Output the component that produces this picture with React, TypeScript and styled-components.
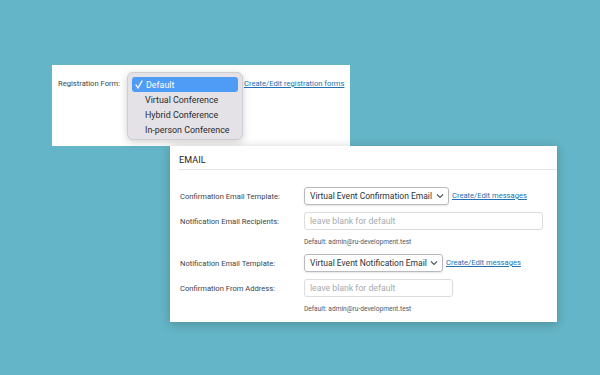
import styled, { createGlobalStyle } from "styled-components";

const GlobalStyle = createGlobalStyle`
    html, body {
        margin: 0;
        padding: 0;
        background: #64b5c7;
        font-family: "Roboto", "Liberation Sans", sans-serif;
    }
`;

const Page = styled.div`
    width: 600px;
    height: 375px;
    overflow: hidden;
    display: flex;
    flex-direction: column;
    background: #64b5c7;
`;

const TopPanel = styled.div`
    position: relative;
    flex-shrink: 0;
    margin: 65px 0 0 52px;
    width: 298px;
    height: 81px;
    background: #fff;
    box-sizing: border-box;
    padding: 14px 0 0 6px;
    display: flex;
    align-items: flex-start;
`;

const RegLabel = styled.span`
    font-size: 7.6px;
    color: #3c434a;
    width: 186px;
    line-height: 10px;
`;

const Link = styled.a`
    font-size: 7.6px;
    color: #2271b1;
    text-decoration: underline;
    line-height: 10px;
    white-space: nowrap;
`;

const Menu = styled.div`
    position: absolute;
    left: 75px;
    top: 7px;
    width: 116px;
    height: 68px;
    box-sizing: border-box;
    padding: 4px;
    border-radius: 6px;
    background: #e4e2e7;
    border: 1px solid #cfcdd2;
    box-shadow: 0 2px 8px rgba(0, 0, 0, 0.18);
    display: flex;
    flex-direction: column;
`;

const MenuItem = styled.div<{ active?: boolean }>`
    height: 15px;
    flex-shrink: 0;
    display: flex;
    align-items: center;
    padding-left: ${(p) => (p.active ? 3 : 13)}px;
    gap: 3px;
    border-radius: 3px;
    font-size: 8.9px;
    white-space: nowrap;
    color: ${(p) => (p.active ? "#fff" : "#2a2a2c")};
    background: ${(p) => (p.active ? "#4f9cf6" : "transparent")};
`;

const EmailPanel = styled.div`
    flex-shrink: 0;
    margin-left: 170px;
    width: 387px;
    height: 176px;
    background: #fff;
    box-shadow: 0 2px 10px rgba(0, 0, 0, 0.22);
    display: flex;
    flex-direction: column;
    position: relative;
`;

const Header = styled.div`
    flex-shrink: 0;
    margin-left: 9px;
    height: 24px;
    box-sizing: border-box;
    padding-top: 9px;
    border-bottom: 1px solid #e5e7e9;
    font-size: 9px;
    color: #1d2327;
    letter-spacing: 0.1px;
`;

const Form = styled.div`
    display: grid;
    grid-template-columns: 124px 1fr;
    padding: 17px 0 0 10px;
`;

const Label = styled.div`
    font-size: 7.6px;
    color: #3c434a;
    display: flex;
    align-items: center;
    height: 18px;
    padding-top: 1px;
    box-sizing: border-box;
`;

const Field = styled.div`
    display: flex;
    align-items: center;
    gap: 3px;
    height: 18px;
`;

const Select = styled.div<{ w: number }>`
    width: ${(p) => p.w}px;
    height: 18px;
    box-sizing: border-box;
    border: 1px solid #b8babd;
    border-radius: 3px;
    box-shadow: 0 1px 2px rgba(0, 0, 0, 0.1);
    display: flex;
    align-items: center;
    justify-content: space-between;
    padding: 0 4px 0 5px;
    font-size: 8.5px;
    color: #2c3338;
    white-space: nowrap;
`;

const Input = styled.div<{ w: number }>`
    width: ${(p) => p.w}px;
    height: 18px;
    box-sizing: border-box;
    border: 1px solid #dcdcde;
    border-radius: 3px;
    display: flex;
    align-items: center;
    padding-left: 5px;
    font-size: 8.7px;
    color: #a7aaad;
`;

const Help = styled.div`
    grid-column: 2;
    font-size: 6.6px;
    color: #50575e;
    height: 12px;
    margin: 6px 0;
    display: flex;
    align-items: center;
`;

const Spacer = styled.div`
    height: 7px;
    grid-column: 1 / 3;
`;

const Chevron = () => (
    <svg width="8" height="6" viewBox="0 0 8 6">
        <path d="M1 1.5 L4 4.5 L7 1.5" fill="none" stroke="#50575e" strokeWidth="1.1" />
    </svg>
);

const Check = () => (
    <svg width="8" height="9" viewBox="0 0 8 9">
        <path d="M1 5 L3 8 L7 1" fill="none" stroke="#fff" strokeWidth="1.3" strokeLinecap="round" />
    </svg>
);

export default function App() {
    return (
        <Page>
            <GlobalStyle />
            <TopPanel>
                <RegLabel>Registration Form:</RegLabel>
                <Link>Create/Edit registration forms</Link>
                <Menu>
                    <MenuItem active>
                        <Check />
                        Default
                    </MenuItem>
                    <MenuItem>Virtual Conference</MenuItem>
                    <MenuItem>Hybrid Conference</MenuItem>
                    <MenuItem>In-person Conference</MenuItem>
                </Menu>
            </TopPanel>
            <EmailPanel>
                <Header>EMAIL</Header>
                <Form>
                    <Label>Confirmation Email Template:</Label>
                    <Field>
                        <Select w={145}>
                            Virtual Event Confirmation Email <Chevron />
                        </Select>
                        <Link>Create/Edit messages</Link>
                    </Field>
                    <Spacer />
                    <Label>Notification Email Recipients:</Label>
                    <Field>
                        <Input w={239}>leave blank for default</Input>
                    </Field>
                    <Help>Default: admin@ru-development.test</Help>
                    <Label>Notification Email Template:</Label>
                    <Field>
                        <Select w={139}>
                            Virtual Event Notification Email <Chevron />
                        </Select>
                        <Link>Create/Edit messages</Link>
                    </Field>
                    <Spacer />
                    <Label>Confirmation From Address:</Label>
                    <Field>
                        <Input w={149}>leave blank for default</Input>
                    </Field>
                    <Help>Default: admin@ru-development.test</Help>
                </Form>
            </EmailPanel>
        </Page>
    );
}
